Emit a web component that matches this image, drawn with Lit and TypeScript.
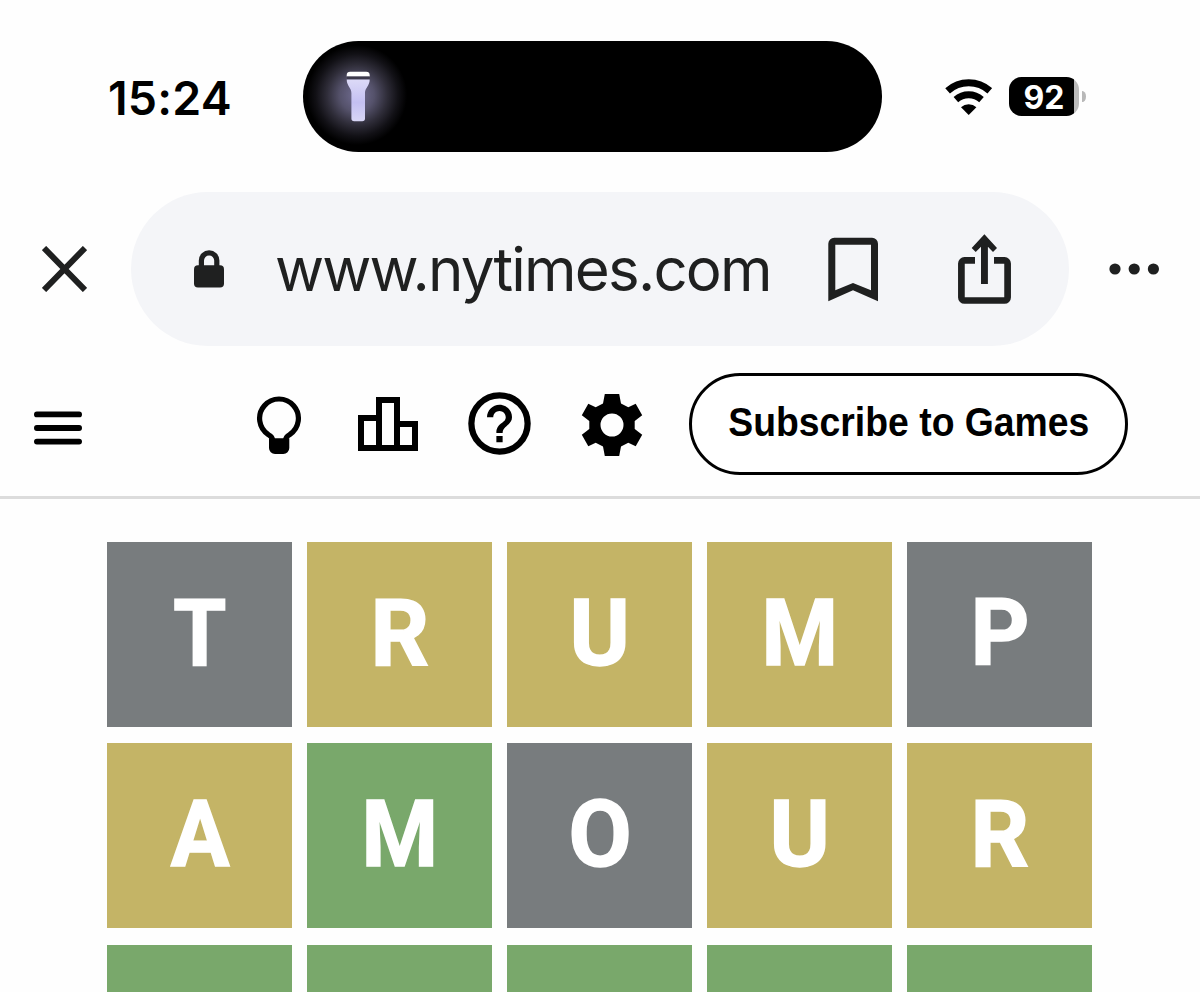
import { LitElement, html, css } from 'lit';
import { customElement, property } from 'lit/decorators.js';

@customElement('status-bar')
export class StatusBar extends LitElement {
  static styles = css`
    :host {
      display: flex;
      align-items: center;
      height: 111px;
      padding-top: 41px;
      font-family: 'Inter', sans-serif;
    }
    .time {
      width: 195px;
      padding: 3px 0 0 108px;
      font-size: 46.5px;
      font-weight: 600;
      letter-spacing: 0.2px;
      line-height: 1;
      white-space: nowrap;
    }
    .island {
      width: 579px;
      height: 111px;
      border-radius: 56px;
      background: radial-gradient(circle 50px at 54px 54px, #716d92 0, #55526b 34%, #2f2d39 60%, #121116 82%, #000 100%) #000;
      overflow: hidden;
    }
    .torch {
      display: block;
      margin: 30px 0 0 43px;
    }
    .wifi {
      margin-left: 63px;
    }
    .battery {
      display: flex;
      align-items: center;
      justify-content: center;
      box-sizing: border-box;
      width: 70px;
      height: 39px;
      margin-left: 17px;
      padding-top: 2px;
      border-radius: 12.5px;
      background: linear-gradient(90deg, #000 65.5px, #bbb 65.5px);
      color: white;
      font-size: 32px;
      font-weight: 700;
    }
    .nub {
      width: 4px;
      height: 11px;
      margin-left: 3px;
      border-radius: 0 4px 4px 0 / 0 6px 6px 0;
      background: #b8b8b8;
    }
  `;

  render() {
    return html`
      <div class="time">15:24</div>
      <div class="island">
        <svg class="torch" width="24" height="51" viewBox="0 0 24 51">
          <defs>
            <linearGradient id="beam" x1="0" y1="0" x2="0" y2="1">
              <stop offset="0" stop-color="#dcdaf7" />
              <stop offset="0.55" stop-color="#c4c0f2" />
              <stop offset="1" stop-color="#d8d6f5" />
            </linearGradient>
          </defs>
          <path fill="#fff" d="M.7 5.6V4A3.5 3.5 0 0 1 4.2.7H20.2A3.5 3.5 0 0 1 23.7 4V5.6Z" />
          <rect x="1" y="5.6" width="22.5" height="2.7" fill="#3d3a4c" />
          <path fill="url(#beam)" d="M.7 8.6H23.7C23.7 15 19 17 19 22V47.5A2.8 2.8 0 0 1 16.2 50.3H8.2A2.8 2.8 0 0 1 5.4 47.5V22C5.4 17 .7 15 .7 8.6Z" />
        </svg>
      </div>
      <svg class="wifi" width="47" height="38" viewBox="0 0 47 38">
        <g fill="none" stroke="#000" stroke-width="7">
          <path d="M2.6 12.8A31.6 31.6 0 0 1 44.8 12.8" />
          <path d="M10.9 21.6A19.6 19.6 0 0 1 36.5 21.6" />
        </g>
        <path d="M23.7 37L16 29.2A11.2 11.2 0 0 1 31.4 29.2Z" />
      </svg>
      <div class="battery">92</div>
      <div class="nub"></div>
    `;
  }
}

@customElement('address-bar')
export class AddressBar extends LitElement {
  static styles = css`
    :host {
      display: flex;
      align-items: center;
      height: 154px;
      margin-top: 40px;
      color: #1f2020;
      font-family: 'Inter', sans-serif;
    }
    svg {
      display: block;
      flex: none;
    }
    .close {
      margin: 0 44px 0 42px;
    }
    .pill {
      display: flex;
      align-items: center;
      box-sizing: border-box;
      width: 938px;
      height: 154px;
      padding-left: 63px;
      border-radius: 77px;
      background: #f4f5f8;
    }
    .url {
      width: 553px;
      margin-left: 51px;
      font-size: 60px;
      letter-spacing: -1.8px;
      line-height: 72px;
      white-space: nowrap;
    }
    .share {
      margin-left: 80px;
    }
    .more {
      margin-left: 40px;
    }
  `;

  render() {
    return html`
      <svg class="close" width="45" height="46" viewBox="0 0 45 46">
        <path d="M2 2L43 44M43 2L2 44" stroke="currentColor" stroke-width="6" />
      </svg>
      <div class="pill">
        <svg width="30" height="38" viewBox="0 0 30 38" fill="currentColor">
          <rect x="0" y="15.3" width="30" height="22.3" rx="4" />
          <path d="M7.4 17V10.5A7.7 7.7 0 0 1 22.8 10.5V17" fill="none" stroke="currentColor" stroke-width="5.2" />
        </svg>
        <div class="url">www.nytimes.com</div>
        <svg width="50" height="65" viewBox="0 0 50 65" fill="currentColor">
          <path fill-rule="evenodd" d="M.3 64.3V6.7A6 6 0 0 1 6.3.7H44A6 6 0 0 1 50 6.7V64.3L25 53.3ZM7.3 53.3L25 46L43 53.3V7.7H7.3Z" />
        </svg>
        <svg class="share" width="53" height="70" viewBox="0 0 53 70" fill="currentColor">
          <path d="M26.4.3L39 14L35 18L29.9 12.8V50H23V12.8L17.7 18L13.7 14Z" />
          <path d="M17 26.4H6.5A3.1 3.1 0 0 0 3.4 29.5V63.4A3.1 3.1 0 0 0 6.5 66.5H46.5A3.1 3.1 0 0 0 49.6 63.4V29.5A3.1 3.1 0 0 0 46.5 26.4H36" fill="none" stroke="currentColor" stroke-width="6.7" />
        </svg>
      </div>
      <svg class="more" width="51" height="12" viewBox="0 0 51 12" fill="currentColor">
        <circle cx="6" cy="6" r="5.6" />
        <circle cx="25.2" cy="6" r="5.6" />
        <circle cx="44.4" cy="6" r="5.6" />
      </svg>
    `;
  }
}

@customElement('game-toolbar')
export class GameToolbar extends LitElement {
  static styles = css`
    :host {
      display: flex;
      align-items: center;
      box-sizing: border-box;
      height: 153px;
      padding: 5px 71px 0 34px;
      border-bottom: 3px solid #dcdcdc;
      font-family: 'Liberation Sans', sans-serif;
    }
    svg {
      display: block;
      flex: none;
    }
    .menu {
      margin: 8px 174px 0 0;
    }
    .hint {
      margin-top: 3px;
    }
    .stats {
      margin-left: 56px;
    }
    .help {
      margin-left: 44px;
    }
    .gear {
      margin: 2px 0 0 44px;
    }
    .subscribe {
      box-sizing: border-box;
      width: 439px;
      height: 102px;
      margin-left: 46px;
      padding: 0 0 3px;
      border: 3px solid #000;
      border-radius: 51px;
      background: white;
      color: #000;
      font-family: inherit;
      font-size: 40.5px;
      font-weight: 700;
      white-space: nowrap;
    }
    .label {
      display: inline-block;
      transform: scaleX(0.922);
    }
  `;

  render() {
    return html`
      <svg class="menu" width="48" height="34" viewBox="0 0 48 34">
        <path d="M2.9 3.4H45.1M2.9 17H45.1M2.9 30.6H45.1" stroke="#000" stroke-width="5.8" stroke-linecap="round" />
      </svg>
      <svg class="hint" width="46" height="58" viewBox="0 0 46 58">
        <path d="M16.5 44C16.5 41 15 40 12.5 38.7A19.4 19.4 0 1 1 33.5 38.7C31 40 29.7 41 29.7 44" fill="none" stroke="#000" stroke-width="5.2" />
        <path d="M13 42.3H33.3V52A6 6 0 0 1 27.3 58H19A6 6 0 0 1 13 52Z" />
      </svg>
      <svg class="stats" width="60" height="54" viewBox="0 0 60 54">
        <path fill-rule="evenodd" d="M0 18H18V0H42V24H60V54H0ZM6 24V48H18V24ZM24 6V48H36V6ZM42 30V48H54V30Z" />
      </svg>
      <svg class="help" width="75" height="75" viewBox="0 0 24 24">
        <circle cx="12" cy="12" r="9" fill="none" stroke="#000" stroke-width="2" />
        <path d="M11 18h2v-2h-2zM12 6c-2.21 0-4 1.79-4 4h2c0-1.1.9-2 2-2s2 .9 2 2c0 2-3 1.75-3 5h2c0-2.25 3-2.5 3-5 0-2.21-1.79-4-4-4z" />
      </svg>
      <svg class="gear" width="62" height="62" viewBox="-31 -31 62 62">
        <path fill-rule="evenodd" d="M-7.2-31H7.2L9-21.5L16.3-17.8L23.7-21.2L30.2-9.7L22.7-4V4L30.2 9.7L23.7 21.2L16.3 17.8L9 21.5L7.2 31H-7.2L-9 21.5L-16.3 17.8L-23.7 21.2L-30.2 9.7L-22.7 4V-4L-30.2-9.7L-23.7-21.2L-16.3-17.8L-9-21.5ZM0-11.5A11.5 11.5 0 1 0 0 11.5A11.5 11.5 0 1 0 0-11.5Z" />
      </svg>
      <button class="subscribe"><span class="label">Subscribe to Games</span></button>
    `;
  }
}

// narrower cuts for the letters that run wide in the tile font
const LETTER_WIDTHS: Record<string, number> = { T: 0.92, M: 0.94, A: 0.94 };

@customElement('game-tile')
export class GameTile extends LitElement {
  @property() letter = '';
  @property({ reflect: true }) evaluation = 'absent';

  static styles = css`
    :host {
      display: flex;
      align-items: center;
      justify-content: center;
      box-sizing: border-box;
      height: 185px;
      padding-bottom: 3px;
      background: #787c7e;
      color: white;
      font-family: 'Roboto', sans-serif;
      font-size: 93px;
      font-weight: 700;
      line-height: 1;
    }
    :host([evaluation='present']) {
      background: #c4b466;
    }
    :host([evaluation='correct']) {
      background: #79a86b;
    }
    .letter {
      display: block;
      -webkit-text-stroke: 1.6px white;
    }
  `;

  render() {
    return html`
      <span class="letter" style="transform: scaleX(${LETTER_WIDTHS[this.letter] ?? 0.985})">${this.letter}</span>
    `;
  }
}

@customElement('app-root')
export class AppRoot extends LitElement {
  // a = absent, p = present, c = correct
  rows = [
    { word: 'TRUMP', marks: 'apppa' },
    { word: 'AMOUR', marks: 'pcapp' },
    { word: '', marks: 'ccccc' },
  ];

  names: Record<string, string> = { a: 'absent', p: 'present', c: 'correct' };

  static styles = css`
    :host {
      display: block;
      width: 1200px;
      height: 992px;
      overflow: hidden;
      background: #fefefe;
      color: #000;
    }
    .board {
      display: grid;
      grid-template-columns: repeat(5, 185px);
      gap: 16.3px 15px;
      padding: 43.2px 0 0 107.4px;
    }
  `;

  render() {
    return html`
      <status-bar></status-bar>
      <address-bar></address-bar>
      <game-toolbar></game-toolbar>
      <div class="board">
        ${this.rows.map((row) => [...row.marks].map((mark, i) => html`
          <game-tile .letter=${row.word[i] ?? ''} evaluation=${this.names[mark]}></game-tile>
        `))}
      </div>
    `;
  }
}
